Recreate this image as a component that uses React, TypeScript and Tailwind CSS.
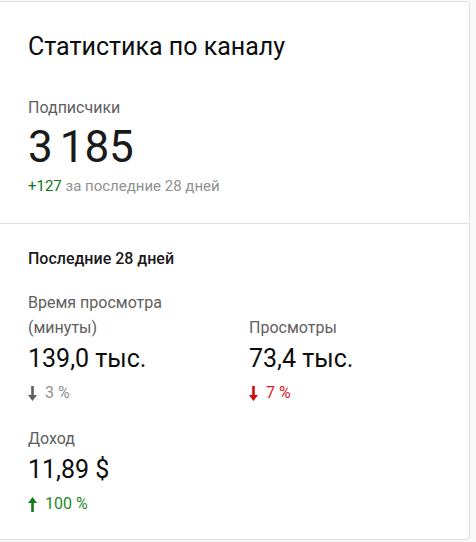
import React from 'react';

function Arrow({ dir, className }: { dir: 'up' | 'down'; className: string }) {
  return (
    <svg viewBox="0 0 9 15" className={className} fill="currentColor">
      {dir === 'down' ? (
        <path d="M3.2 0h2.6v9H9l-4.5 6L0 9h3.2z" />
      ) : (
        <path d="M3.2 15h2.6V6H9L4.5 0 0 6h3.2z" />
      )}
    </svg>
  );
}

function Metric({
  label,
  value,
  change,
  dir,
  tone,
}: {
  label: React.ReactNode;
  value: string;
  change: string;
  dir: 'up' | 'down';
  tone: 'gray' | 'red' | 'green';
}) {
  const color =
    tone === 'red' ? 'text-[#e0161e]' : tone === 'green' ? 'text-[#1e8a1e]' : 'text-[#909090]';
  const arrowColor =
    tone === 'red' ? 'text-[#d60b0b]' : tone === 'green' ? 'text-[#0f7f12]' : 'text-[#606060]';
  return (
    <div className="flex flex-col">
      <div className="text-[16px] leading-[25px] text-[#606060]">{label}</div>
      <div className="mt-[4px] text-[25px] leading-[30px] text-[#0d0d0d]">{value}</div>
      <div className={`mt-[9px] flex items-center gap-[8px] text-[16px] leading-[20px] ${color}`}>
        <Arrow dir={dir} className={`h-[15px] w-[9px] ${arrowColor}`} />
        <span>{change}</span>
      </div>
    </div>
  );
}

export default function App() {
  return (
    <div className="h-[542px] w-[476px] bg-[#f9f9f9] pt-px font-['Roboto',sans-serif]">
      <div className="h-[539px] w-[470px] rounded-r-[4px] border-y border-r border-[#e0e0e0] bg-white">
        <div className="h-[222px] border-b border-[#e0e0e0] px-[28px] pt-[29px]">
          <h1 className="text-[25px] leading-[32px] text-[#0d0d0d]">Статистика по каналу</h1>
          <div className="mt-[35px] text-[16px] leading-[20px] text-[#606060]">Подписчики</div>
          <div className="mt-[3px] text-[44px] leading-[52px] text-[#1a1a1a]">
            3<span className="tracking-[-4px]"> </span>185
          </div>
          <div className="mt-[3px] text-[15px] leading-[20px]">
            <span className="text-[#107516]">+127</span>{' '}
            <span className="text-[#909090]">за последние 28 дней</span>
          </div>
        </div>
        <div className="px-[28px] pt-[25px]">
          <div className="text-[16px] font-medium leading-[20px] text-[#1a1a1a]">Последние 28 дней</div>
          <div className="mt-[21px] grid grid-cols-[221px_1fr] items-end">
            <Metric
              label={
                <>
                  Время просмотра
                  <br />
                  (минуты)
                </>
              }
              value="139,0 тыс."
              change="3 %"
              dir="down"
              tone="gray"
            />
            <Metric label="Просмотры" value="73,4 тыс." change="7 %" dir="down" tone="red" />
          </div>
          <div className="mt-[23px]">
            <Metric label="Доход" value="11,89 $" change="100 %" dir="up" tone="green" />
          </div>
        </div>
      </div>
    </div>
  );
}
